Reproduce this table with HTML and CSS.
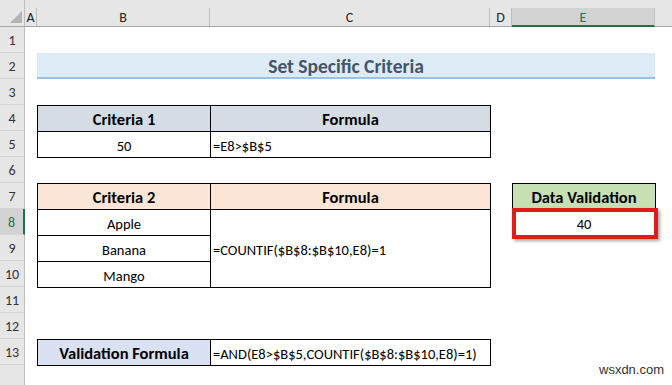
FILE: index.html
```html
<!DOCTYPE html>
<html>
<head>
<meta charset="utf-8">
<link rel="stylesheet" href="styles.css">
</head>
<body>
<div class="sheet">
  <div class="corner"><span class="tri"></span></div>
  <div class="colhead">
    <div class="ch w-a">A</div>
    <div class="ch w-b">B</div>
    <div class="ch w-c">C</div>
    <div class="ch w-d">D</div>
    <div class="ch w-e sel">E</div>
    <div class="ch w-rest"></div>
  </div>
  <div class="rowhead">
    <div class="rh">1</div>
    <div class="rh">2</div>
    <div class="rh">3</div>
    <div class="rh">4</div>
    <div class="rh">5</div>
    <div class="rh">6</div>
    <div class="rh">7</div>
    <div class="rh sel">8</div>
    <div class="rh">9</div>
    <div class="rh">10</div>
    <div class="rh">11</div>
    <div class="rh">12</div>
    <div class="rh">13</div>
    <div class="rh"></div>
  </div>
  <div class="cells">
    <div class="title">Set Specific Criteria</div>

    <div class="tbl t1">
      <div class="c hd blue center">Criteria 1</div>
      <div class="c hd blue center">Formula</div>
      <div class="c center">50</div>
      <div class="c left">=E8&gt;$B$5</div>
    </div>

    <div class="tbl t2">
      <div class="c hd peach center">Criteria 2</div>
      <div class="c hd peach center">Formula</div>
      <div class="c center">Apple</div>
      <div class="c left merged">=COUNTIF($B$8:$B$10,E8)=1</div>
      <div class="c center">Banana</div>
      <div class="c center">Mango</div>
    </div>

    <div class="dv">
      <div class="dvh">Data Validation</div>
      <div class="dvv">40</div>
    </div>

    <div class="tbl t3">
      <div class="c hd lav center">Validation Formula</div>
      <div class="c left">=AND(E8&gt;$B$5,COUNTIF($B$8:$B$10,E8)=1)</div>
    </div>
  </div>
  <div class="wm">wsxdn.com</div>
</div>
</body>
</html>
```
FILE: styles.css
```css
* { box-sizing: border-box; }
html, body { margin: 0; padding: 0; background: #fff; }
body {
  width: 672px;
  height: 385px;
  overflow: hidden;
  font-family: "Carlito", "Lato", "Liberation Sans", sans-serif;
}
.sheet {
  position: relative;
  display: grid;
  grid-template-columns: 25px 647px;
  grid-template-rows: 27px 358px;
  width: 672px;
  height: 385px;
}
.corner {
  background: #e6e6e6;
  border-right: 1px solid #bebebe;
  border-bottom: 1px solid #a6a6a6;
  position: relative;
}
.tri {
  position: absolute;
  left: 10px;
  top: 11px;
  width: 0;
  height: 0;
  border-left: 12px solid transparent;
  border-bottom: 12px solid #b4b4b4;
}
.colhead {
  display: flex;
  background: #e6e6e6;
  padding-top: 8px;
  border-bottom: 1px solid #a6a6a6;
}
.ch {
  height: 18px;
  border-right: 1px solid #bebebe;
  display: flex;
  align-items: center;
  justify-content: center;
  font-size: 14px;
  color: #222;
}
.w-a { width: 12px; }
.w-b { width: 173px; }
.w-c { width: 280px; }
.w-d { width: 22px; }
.w-e { width: 143px; }
.w-rest { flex: 1; border-right: none; }
.ch.sel {
  background: #d2d2d2;
  color: #217346;
  border-bottom: 2px solid #217346;
  height: 19px;
  padding-top: 1px;
}
.rowhead {
  display: flex;
  flex-direction: column;
  background: #e6e6e6;
  border-right: 1px solid #bebebe;
}
.rh {
  height: 26px;
  flex: none;
  border-bottom: 1px solid #d4d4d4;
  display: flex;
  align-items: center;
  justify-content: center;
  padding-top: 2px;
  font-size: 14px;
  color: #333;
}
.rh.sel {
  background: #d2d2d2;
  color: #217346;
  margin-right: -1px;
  border-right: 2px solid #217346;
}
.cells {
  display: grid;
  grid-template-columns: 12px 173px 280px 22px 143px 1fr;
  grid-template-rows: repeat(14, 26px);
  font-size: 14.5px;
  color: #000;
}
.title {
  grid-column: 2 / 6;
  grid-row: 2;
  background: #ddebf7;
  border-bottom: 2px solid #9bc2e6;
  display: flex;
  align-items: center;
  justify-content: center;
  font-weight: bold;
  font-size: 19.5px;
  color: #44546a;
  padding-top: 1px;
}
.tbl {
  display: grid;
  grid-template-columns: 172px 279px;
  gap: 1px;
  padding: 1px;
  background: #000;
  width: 454px;
  align-self: start;
  justify-self: start;
}
.t1 { grid-column: 2 / 4; grid-row: 4 / span 2; grid-template-rows: 25px 25px; height: 53px; }
.t2 { grid-column: 2 / 4; grid-row: 7 / span 4; grid-template-rows: 25px 25px 25px 25px; height: 105px; }
.t3 { grid-column: 2 / 4; grid-row: 13; grid-template-rows: 25px; height: 27px; }
.c {
  background: #fff;
  display: flex;
  align-items: center;
  padding-top: 2px;
  white-space: nowrap;
}
.center { justify-content: center; }
.left { justify-content: flex-start; padding-left: 2px; }
.hd { font-weight: bold; font-size: 16.5px; padding-top: 1px; }
.blue { background: #d6dce4; }
.peach { background: #fce4d6; }
.lav { background: #d9e1f2; }
.merged { grid-column: 2; grid-row: 2 / span 3; }
.dv {
  grid-column: 5;
  grid-row: 7 / span 2;
  width: 144px;
  align-self: start;
  display: flex;
  flex-direction: column;
}
.dvh {
  height: 27px;
  border: 1px solid #000;
  background: #c6e0b4;
  display: flex;
  align-items: center;
  justify-content: center;
  font-weight: bold;
  font-size: 16.5px;
  padding-top: 1px;
}
.dvv {
  position: relative;
  height: 26px;
  display: flex;
  align-items: center;
  justify-content: center;
  padding-top: 1px;
}
.dvv::after {
  content: "";
  position: absolute;
  left: 0;
  top: -2px;
  right: -2px;
  bottom: -3px;
  border: 4px solid #e01b1b;
  box-shadow: 2px 2px 3px rgba(0,0,0,0.35);
}
.wm {
  position: absolute;
  left: 599px;
  top: 362px;
  font-family: "Liberation Sans", Arial, sans-serif;
  font-size: 13px;
  color: #333;
}
```
